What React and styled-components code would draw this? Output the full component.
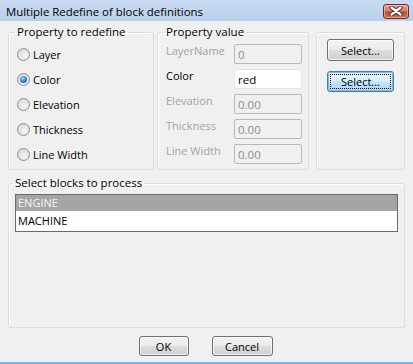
import React from 'react'
import styled, { createGlobalStyle, css } from 'styled-components'

const GlobalStyle = createGlobalStyle`
  html, body {
    margin: 0;
    padding: 0;
    background: #f0f0f0;
  }
  body {
    font-family: 'Open Sans', 'Noto Sans', sans-serif;
    font-size: 11px;
    color: #000;
  }
`

const redefineOptions = ['Layer', 'Color', 'Elevation', 'Thickness', 'Line Width']

const valueRows = [
  { label: 'LayerName', value: '0', enabled: false },
  { label: 'Color', value: 'red', enabled: true },
  { label: 'Elevation', value: '0.00', enabled: false },
  { label: 'Thickness', value: '0.00', enabled: false },
  { label: 'Line Width', value: '0.00', enabled: false }
]

const blocks = ['ENGINE', 'MACHINE']

function CloseIcon () {
  return (
    <svg width='14' height='10' viewBox='0 0 14 10'>
      <path d='M2.5 1.5 L11.5 8.5 M11.5 1.5 L2.5 8.5' stroke='#4a2a28' strokeWidth='4.4' strokeLinecap='round' />
      <path d='M2.5 1.5 L11.5 8.5 M11.5 1.5 L2.5 8.5' stroke='#fff' strokeWidth='2.4' strokeLinecap='round' />
    </svg>
  )
}

function App () {
  return (
    <>
      <GlobalStyle />
      <Window>
        <TitleBar>
          <Title>Multiple Redefine of block definitions</Title>
          <CloseButton><CloseIcon /></CloseButton>
        </TitleBar>
        <Body>
          <TopRow>
            <Group $width={146}>
              <Legend>Property to redefine</Legend>
              <RadioList>
                {redefineOptions.map(option => (
                  <RadioRow key={option}>
                    <Radio $checked={option === 'Color'} />
                    <span>{option}</span>
                  </RadioRow>
                ))}
              </RadioList>
            </Group>
            <Group $width={152}>
              <Legend>Property value</Legend>
              <ValueGrid>
                {valueRows.map(row => (
                  <ValueRow key={row.label}>
                    <ValueLabel $enabled={row.enabled}>{row.label}</ValueLabel>
                    <ValueInput $enabled={row.enabled}>{row.value}</ValueInput>
                  </ValueRow>
                ))}
              </ValueGrid>
            </Group>
            <Group $width={89} $plain>
              <ButtonColumn>
                <Button $width={67} $height={22}>Select...</Button>
                <Button $width={67} $height={21} $focused>Select...</Button>
              </ButtonColumn>
            </Group>
          </TopRow>
          <BlocksGroup>
            <Legend>Select blocks to process</Legend>
            <ListBox>
              {blocks.map((name, i) => (
                <ListItem key={name} $selected={i === 0}>{name}</ListItem>
              ))}
            </ListBox>
          </BlocksGroup>
          <Footer>
            <Button $width={50} $height={20}>OK</Button>
            <Button $width={61} $height={20}>Cancel</Button>
          </Footer>
        </Body>
      </Window>
    </>
  )
}

const Window = styled.div`
  width: 413px;
  height: 364px;
  display: flex;
  flex-direction: column;
  background: #f0f0f0;
  box-sizing: border-box;
  border-bottom: 2px solid #74b6e6;
  overflow: hidden;
`

const TitleBar = styled.div`
  height: 21px;
  flex: none;
  display: flex;
  align-items: center;
  justify-content: space-between;
  background: linear-gradient(#c8dbf1, #b9d0ec);
  padding: 0 4px 0 6px;
`

const Title = styled.span`
  font-size: 11.4px;
  color: #000;
  margin-top: 1px;
`

const CloseButton = styled.div`
  width: 26px;
  height: 15px;
  margin-top: 1px;
  box-sizing: border-box;
  border: 1px solid #6b2a24;
  border-radius: 3px;
  background: linear-gradient(#e9a898 0%, #d87a62 45%, #c4462c 55%, #d4744f 100%);
  box-shadow: inset 0 0 0 1px rgba(255, 220, 210, 0.5);
  display: flex;
  align-items: center;
  justify-content: center;
`

const Body = styled.div`
  flex: 1;
  display: flex;
  flex-direction: column;
  padding: 3px 8px 0 8px;
`

const TopRow = styled.div`
  display: flex;
  height: 146px;
`

const Group = styled.fieldset`
  margin: 0;
  width: ${p => p.$width}px;
  box-sizing: border-box;
  border: 1px solid #d5dfe5;
  border-radius: 3px;
  box-shadow: inset 1px 1px 0 #fff;
  padding: 0 6px 2px 8px;
  min-width: 0;
  & + & {
    margin-left: 3px;
  }
  &:last-child {
    margin-left: 7px;
  }
  ${p => p.$plain && css`
    margin-top: 8px;
    padding: 0;
  `}
`

const Legend = styled.legend`
  padding: 0 2px;
  margin-left: -2px;
  line-height: 16px;
  height: 16px;
  font-size: 11.5px;
  color: #000;
`

const RadioList = styled.div`
  display: flex;
  flex-direction: column;
  padding-top: 2px;
`

const RadioRow = styled.label`
  display: flex;
  align-items: center;
  gap: 3px;
  height: 25px;
`

const Radio = styled.span`
  width: 13px;
  height: 13px;
  box-sizing: border-box;
  border-radius: 50%;
  border: 1px solid #8e8f8f;
  background: radial-gradient(circle at 60% 65%, #f6f6f6 0%, #e0e0e0 60%, #cfcfcf 100%);
  display: flex;
  align-items: center;
  justify-content: center;
  &::after {
    content: '';
    display: ${p => (p.$checked ? 'block' : 'none')};
    width: 7px;
    height: 7px;
    border-radius: 50%;
    background: radial-gradient(circle at 40% 35%, #9bd8f8 0%, #2b7fbf 55%, #18507f 100%);
  }
`

const ValueGrid = styled.div`
  display: flex;
  flex-direction: column;
  gap: 5px;
  padding-top: 4px;
`

const ValueRow = styled.div`
  display: flex;
  align-items: flex-start;
  height: 20px;
`

const ValueLabel = styled.span`
  width: 68px;
  flex: none;
  line-height: 16px;
  margin-top: -1px;
  color: ${p => (p.$enabled ? '#000' : '#a3a3a3')};
`

const ValueInput = styled.div`
  width: 68px;
  height: 20px;
  box-sizing: border-box;
  padding: 3px 2px 0 3px;
  line-height: 14px;
  font-size: 11.5px;
  border: 1px solid ${p => (p.$enabled ? '#e3e5ea' : '#b8b8b8')};
  border-radius: ${p => (p.$enabled ? '0' : '2px')};
  background: ${p => (p.$enabled ? '#fff' : '#f0f0f0')};
  color: ${p => (p.$enabled ? '#000' : '#8c8c8c')};
`

const ButtonColumn = styled.div`
  display: flex;
  flex-direction: column;
  align-items: center;
  gap: 10px;
  padding-top: 6px;
`

const Button = styled.div`
  width: ${p => p.$width}px;
  height: ${p => p.$height}px;
  box-sizing: border-box;
  border: 1px solid #707070;
  border-radius: 3px;
  background: linear-gradient(#f2f2f2 0%, #ebebeb 48%, #dddddd 52%, #cfcfcf 100%);
  box-shadow: inset 0 0 0 1px rgba(255, 255, 255, 0.7);
  display: flex;
  align-items: center;
  justify-content: center;
  color: #000;
  position: relative;
  ${p => p.$focused && css`
    border-color: #3c7fb1;
    background: linear-gradient(#eaf6fd 0%, #d9f0fc 48%, #bee6fd 52%, #a7d9f5 100%);
    box-shadow: inset 0 0 0 1px #6fc2f0;
    &::after {
      content: '';
      position: absolute;
      inset: 2px;
      border: 1px dotted #000;
    }
  `}
`

const BlocksGroup = styled.fieldset`
  margin: 5px 0 0 0;
  height: 153px;
  box-sizing: border-box;
  border: 1px solid #d5dfe5;
  border-radius: 3px;
  box-shadow: inset 1px 1px 0 #fff;
  padding: 3px 6px 3px 6px;
  min-width: 0;
  display: flex;
  flex-direction: column;
`

const ListBox = styled.div`
  flex: 1;
  background: #fff;
  border: 1px solid #6a6a6a;
  padding: 0;
`

const ListItem = styled.div`
  height: 16px;
  line-height: 16px;
  padding-left: 2px;
  margin-bottom: 2px;
  ${p => p.$selected
    ? css`
      background: #a5a5a5;
      color: #f4f4f4;
    `
    : css`
      color: #000;
    `}
`

const Footer = styled.div`
  display: flex;
  justify-content: center;
  gap: 23px;
  margin-top: 8px;
  padding-right: 2px;
`

export default App
